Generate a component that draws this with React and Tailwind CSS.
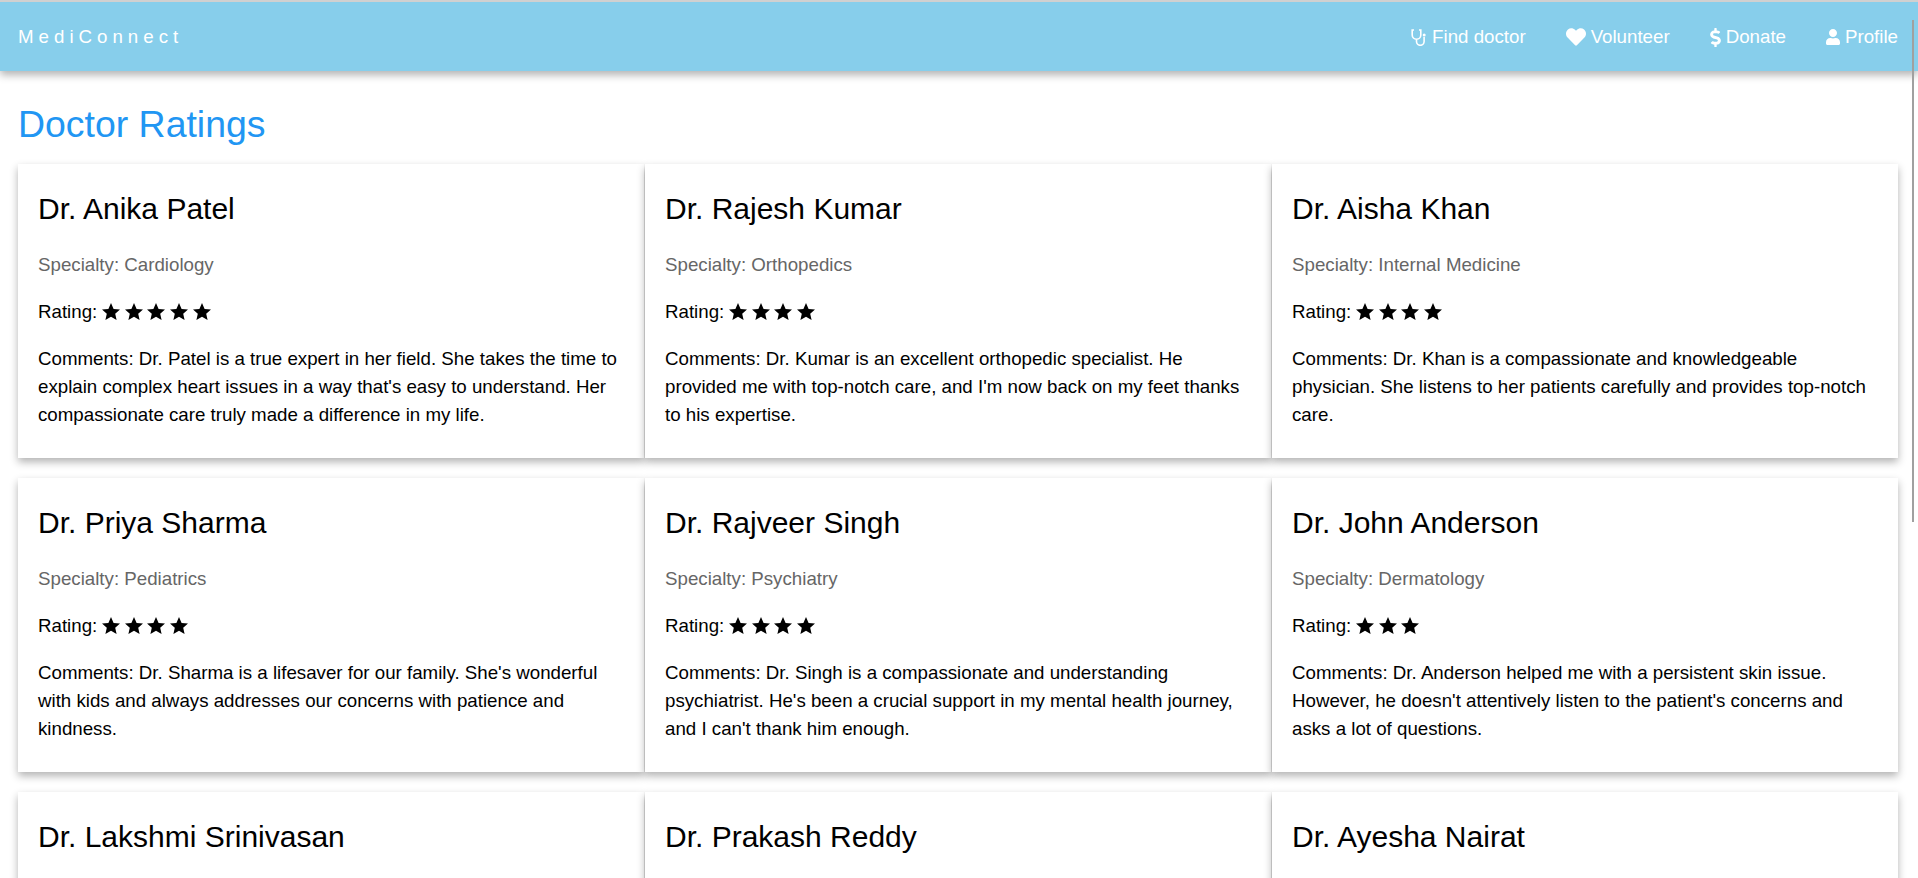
import { FaHeart, FaDollarSign, FaUser } from 'react-icons/fa';

const doctors = [
  { name: 'Dr. Anika Patel', specialty: 'Cardiology', stars: 5, comment: "Dr. Patel is a true expert in her field. She takes the time to explain complex heart issues in a way that's easy to understand. Her compassionate care truly made a difference in my life." },
  { name: 'Dr. Rajesh Kumar', specialty: 'Orthopedics', stars: 4, comment: "Dr. Kumar is an excellent orthopedic specialist. He provided me with top-notch care, and I'm now back on my feet thanks to his expertise." },
  { name: 'Dr. Aisha Khan', specialty: 'Internal Medicine', stars: 4, comment: 'Dr. Khan is a compassionate and knowledgeable physician. She listens to her patients carefully and provides top-notch care.' },
  { name: 'Dr. Priya Sharma', specialty: 'Pediatrics', stars: 4, comment: "Dr. Sharma is a lifesaver for our family. She's wonderful with kids and always addresses our concerns with patience and kindness." },
  { name: 'Dr. Rajveer Singh', specialty: 'Psychiatry', stars: 4, comment: "Dr. Singh is a compassionate and understanding psychiatrist. He's been a crucial support in my mental health journey, and I can't thank him enough." },
  { name: 'Dr. John Anderson', specialty: 'Dermatology', stars: 3, comment: "Dr. Anderson helped me with a persistent skin issue. However, he doesn't attentively listen to the patient's concerns and asks a lot of questions." },
  { name: 'Dr. Lakshmi Srinivasan' },
  { name: 'Dr. Prakash Reddy' },
  { name: 'Dr. Ayesha Nairat' },
];

function StethoscopeIcon() {
  return (
    <svg width="16" height="17" viewBox="0 0 16 17" fill="none" stroke="currentColor" strokeWidth="1.6">
      <path d="M3 1H1.2V6a4.3 4.3 0 0 0 8.6 0V1H8" />
      <path d="M5.5 10.5V12.5a3.8 3.8 0 0 0 7.6 0V8" />
      <circle cx="13.2" cy="6" r="1.5" fill="currentColor" stroke="none" />
    </svg>
  );
}

function Star() {
  return (
    <svg width="18" height="17" viewBox="0 0 18 17" fill="currentColor">
      <polygon points="9,0 11.6,5.9 18,6.5 13.2,10.8 14.6,17 9,13.8 3.4,17 4.8,10.8 0,6.5 6.4,5.9" />
    </svg>
  );
}

function NavLink({ icon, label }) {
  return (
    <a className="flex items-center gap-[5px] text-white text-[18.72px]">
      {icon}
      <span>{label}</span>
    </a>
  );
}

function DoctorCard({ doc }) {
  return (
    <div className="bg-white p-5 h-[294px] shadow-[0_4px_8px_rgba(0,0,0,0.3)]">
      <h2 className="text-[30px] leading-[34px] mt-[8px] text-black">{doc.name}</h2>
      {doc.specialty && (
        <>
          <p className="text-[18.72px] leading-[21px] text-[#666] mt-[28px]">Specialty: {doc.specialty}</p>
          <p className="flex items-center text-[18.72px] leading-[21px] text-black mt-[26px]">
            Rating:
            <span className="flex ml-[5px] gap-[4.6px]">
              {Array.from({ length: doc.stars }, (_, i) => <Star key={i} />)}
            </span>
          </p>
          <p className="text-[18.72px] leading-[28px] text-black mt-[23px]">Comments: {doc.comment}</p>
        </>
      )}
    </div>
  );
}

export default function App() {
  return (
    <div className="relative h-screen overflow-hidden bg-white border-t-2 border-[#d0d0d0]" style={{ fontFamily: '"Liberation Sans", Arial, sans-serif' }}>
      <header className="h-[69px] pt-[2px] bg-[#87ceeb] flex items-center justify-between pl-[18px] pr-5 shadow-[0_4px_8px_rgba(0,0,0,0.3)] relative z-10">
        <div className="text-white text-[18.72px] tracking-[5px]">MediConnect</div>
        <nav className="flex items-center gap-10">
          <NavLink icon={<StethoscopeIcon />} label="Find doctor" />
          <NavLink icon={<FaHeart size={20} />} label="Volunteer" />
          <NavLink icon={<FaDollarSign className="w-[11px] h-[19px]" />} label="Donate" />
          <NavLink icon={<FaUser className="w-[14px] h-[16px]" />} label="Profile" />
        </nav>
      </header>
      <main className="px-[18px] pr-5">
        <h1 className="text-[37.44px] leading-[41px] text-[#2196f3] mt-[33px] mb-[19px]">Doctor Ratings</h1>
        <div className="grid grid-cols-3 gap-x-px gap-y-5">
          {doctors.map(d => <DoctorCard key={d.name} doc={d} />)}
        </div>
      </main>
      <div className="absolute top-[18px] right-[4px] w-[2px] h-[502px] bg-[#a0a0a0] z-20" />
    </div>
  );
}
